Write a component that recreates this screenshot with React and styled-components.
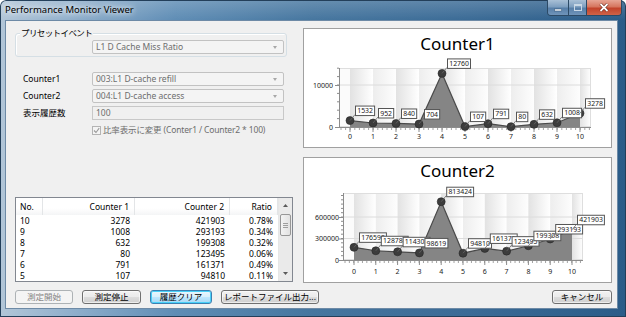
import React from 'react';
import styled, { createGlobalStyle, css } from 'styled-components';

const GlobalStyle = createGlobalStyle`
  html, body {
    margin: 0;
    padding: 0;
    background: #ffffff;
  }
  body {
    font-family: "Noto Sans", "Noto Sans CJK JP", sans-serif;
    font-size: 8.5px;
    color: #000;
  }
`;

const chart1 = {
  title: 'Counter1',
  height: 118,
  titleY: 21,
  plot: { x: 35, y: 39, w: 252, h: 59 },
  x0: 46,
  step: 23,
  zeroY: 98,
  scale: 42 / 10000,
  yTicks: [0, 10000],
  minorY: 2000,
  labelRight: 29,
  xLabelY: 110,
  values: [1532, 952, 840, 704, 12760, 107, 791, 80, 632, 1008, 3278],
};

const chart2 = {
  title: 'Counter2',
  height: 124,
  titleY: 19,
  plot: { x: 39, y: 35, w: 240, h: 67 },
  x0: 50,
  step: 21.8,
  zeroY: 102,
  scale: 21.5 / 300000,
  yTicks: [0, 300000, 600000],
  minorY: 60000,
  labelRight: 35,
  xLabelY: 116,
  values: [176590, 128786, 114302, 98619, 813424, 94810, 161371, 123495, 199308, 293193, 421903],
};

const history = [
  { no: 10, c1: 3278, c2: 421903, ratio: '0.78%' },
  { no: 9, c1: 1008, c2: 293193, ratio: '0.34%' },
  { no: 8, c1: 632, c2: 199308, ratio: '0.32%' },
  { no: 7, c1: 80, c2: 123495, ratio: '0.06%' },
  { no: 6, c1: 791, c2: 161371, ratio: '0.49%' },
  { no: 5, c1: 107, c2: 94810, ratio: '0.11%' },
];

const Window = styled.div`
  width: 626px;
  height: 317px;
  box-sizing: border-box;
  padding: 0 8px 8px 5px;
  display: flex;
  flex-direction: column;
  border-radius: 6px 6px 0 0;
  background:
    linear-gradient(180deg, rgba(255, 255, 255, 0.18) 0, rgba(255, 255, 255, 0) 20px),
    linear-gradient(90deg, #b2c6d8 0%, #8eaecb 12%, #5f8db5 28%, #46769f 50%, #3b6b96 75%, #2b5c88 100%);
  box-shadow: inset 0 0 0 1px #233f5a;
`;

const TitleBar = styled.div`
  height: 20px;
  display: flex;
  align-items: flex-start;
`;

const TitleText = styled.div`
  padding-top: 4px;
  font-size: 9.5px;
  line-height: 12px;
  color: #000;
  text-shadow: 0 0 5px #fff, 0 0 9px rgba(255, 255, 255, 0.9);
`;

const CaptionGroup = styled.div`
  margin-left: auto;
  margin-right: -4px;
  display: flex;
  height: 15px;
  border: 1px solid #2c4a66;
  border-top: none;
  border-radius: 0 0 4px 4px;
  overflow: hidden;
`;

const CaptionButton = styled.div`
  width: ${p => p.w}px;
  display: flex;
  align-items: center;
  justify-content: center;
  border-left: ${p => (p.first ? 'none' : '1px solid #2c4a66')};
  background: ${p =>
    p.close
      ? 'linear-gradient(180deg, #e7a595 0%, #d6765f 45%, #c2432b 55%, #cf6348 100%)'
      : 'linear-gradient(180deg, #a9c0d6 0%, #7e9fc0 45%, #587fa8 55%, #6f94ba 100%)'};
`;

const Client = styled.div`
  flex: 1;
  display: flex;
  flex-direction: column;
  background: #f0f0f0;
  border: 1px solid #6d8aa6;
`;

const Main = styled.div`
  height: 262px;
  display: flex;
`;

const LeftCol = styled.div`
  width: 288px;
  box-sizing: border-box;
  padding-left: 9px;
  display: flex;
  flex-direction: column;
`;

const GroupBox = styled.div`
  position: relative;
  margin-top: 12px;
  width: 272px;
  height: 24px;
  box-sizing: border-box;
  padding: 6px 0 0 76px;
  border: 1px solid #d5dfe5;
  border-radius: 3px;
  box-shadow: inset 1px 1px 0 #fff;
`;

const Legend = styled.span`
  position: absolute;
  top: -7px;
  left: 4px;
  padding: 0 1px;
  background: #f0f0f0;
  line-height: 12px;
  letter-spacing: -0.6px;
`;

const Select = styled.div`
  position: relative;
  width: 192px;
  height: 14px;
  box-sizing: border-box;
  padding-left: 3px;
  border: 1px solid #c2c2c2;
  border-radius: 2px;
  background: #f4f4f4;
  color: #6d6d6d;
  line-height: 12px;

  &::after {
    content: '';
    position: absolute;
    right: 6px;
    top: 5px;
    border-left: 2.5px solid transparent;
    border-right: 2.5px solid transparent;
    border-top: 3px solid #a7a7a7;
  }
`;

const TextBox = styled.div`
  width: 192px;
  height: 14px;
  box-sizing: border-box;
  padding-left: 3px;
  border: 1px solid #c8c8c8;
  background: #f0f0f0;
  color: #6d6d6d;
  line-height: 12px;
`;

const Form = styled.div`
  margin: 15px 0 0 8px;
  display: grid;
  grid-template-columns: 69px 192px;
  row-gap: 3px;
  align-items: center;
`;

const FieldLabel = styled.div`
  line-height: 12px;
`;

const CheckRow = styled.div`
  grid-column: 2;
  margin-top: 1px;
  display: flex;
  align-items: center;
  gap: 2px;
  color: #6d6d6d;
  line-height: 12px;
  letter-spacing: -0.15px;
`;

const CheckBox = styled.div`
  width: 7px;
  height: 7px;
  border: 1px solid #b4b4b4;
  background: #f4f4f4;
  display: flex;
  align-items: center;
  justify-content: center;
`;

const ListView = styled.div`
  margin-top: auto;
  margin-bottom: 1px;
  width: 278px;
  height: 85px;
  box-sizing: border-box;
  border: 1px solid #828790;
  background: #fff;
  display: flex;
`;

const ListBody = styled.div`
  flex: 1;
  display: flex;
  flex-direction: column;
`;

const ListRow = styled.div`
  display: grid;
  grid-template-columns: 27px 92px 95px 48px;
  height: ${p => (p.header ? 17 : 11)}px;
  align-items: center;
  line-height: 11px;
`;

const Cell = styled.div`
  box-sizing: border-box;
  padding: ${p => (p.right ? '0 5px 0 0' : '0 0 0 4px')};
  text-align: ${p => (p.right ? 'right' : 'left')};
  ${p =>
    p.header &&
    css`
      height: 100%;
      display: flex;
      align-items: center;
      justify-content: ${p.right ? 'flex-end' : 'flex-start'};
      border-right: 1px solid #e3e5e7;
      background: linear-gradient(180deg, #ffffff 0%, #ffffff 60%, #f4f5f6 100%);
    `}
`;

const ScrollBar = styled.div`
  width: 15px;
  display: flex;
  flex-direction: column;
  background: #eaeaea;
  border-left: 1px solid #e6e6e6;
`;

const ScrollArrow = styled.div`
  height: 15px;
  display: flex;
  align-items: center;
  justify-content: center;
`;

const ScrollTrack = styled.div`
  flex: 1;
  padding: 1px 1px 0;
`;

const Thumb = styled.div`
  height: 22px;
  box-sizing: border-box;
  border: 1px solid #979797;
  border-radius: 2px;
  background: linear-gradient(90deg, #f3f3f3, #e2e2e2);
  display: flex;
  align-items: center;
  justify-content: center;
`;

const RightCol = styled.div`
  padding: 7px 0 0 9px;
  display: flex;
  flex-direction: column;
  gap: 9px;
`;

const ChartPanel = styled.div`
  width: 309px;
  box-sizing: border-box;
  border: 1px solid #a0a0a0;
  background: #fff;

  svg {
    display: block;
  }
`;

const ButtonBar = styled.div`
  height: 25px;
  box-sizing: border-box;
  padding: 7px 5px 0 9px;
  display: flex;
  gap: 9px;
`;

const Button = styled.div`
  width: ${p => p.w}px;
  height: 14px;
  box-sizing: border-box;
  margin-left: ${p => (p.pushRight ? 'auto' : '0')};
  border: 1px solid #707070;
  border-radius: 3px;
  text-align: center;
  line-height: 12px;
  background: linear-gradient(180deg, #f2f2f2 0%, #ebebeb 48%, #dddddd 52%, #cfcfcf 100%);
  box-shadow: inset 0 0 0 1px rgba(255, 255, 255, 0.6);

  ${p =>
    p.variant === 'default' &&
    css`
      border-color: #3c7fb1;
      background: linear-gradient(180deg, #eaf6fd 0%, #d9f0fc 48%, #bee6fd 52%, #a7d9f5 100%);
      box-shadow: inset 0 0 0 1px #48d0f8;
    `}

  ${p =>
    p.variant === 'disabled' &&
    css`
      border-color: #adb2b5;
      background: #f4f4f4;
      color: #838383;
      box-shadow: none;
    `}
`;

function Chart({ cfg }) {
  const { plot, x0, step, zeroY, scale, values } = cfg;
  const pts = values.map((v, i) => ({ v, x: x0 + step * i, y: zeroY - v * scale }));
  const xEnd = x0 + step * 10;
  const area = [`${x0},${zeroY}`, ...pts.map(p => `${p.x},${p.y}`), `${xEnd},${zeroY}`].join(' ');
  const bands = values.map((v, i) => i);
  const topValue = (zeroY - plot.y) / scale;
  const minor = [];
  for (let v = cfg.minorY; v < topValue; v += cfg.minorY) minor.push(v);
  const xMinor = [];
  for (let x = plot.x + 2; x <= plot.x + plot.w; x += step / 5) xMinor.push(x);

  return (
    <svg width="307" height={cfg.height}>
      <defs>
        <linearGradient id={`band-${cfg.title}`} x1="0" x2="1" y1="0" y2="0">
          <stop offset="0" stopColor="#e2e2e2" />
          <stop offset="1" stopColor="#ffffff" />
        </linearGradient>
      </defs>
      <text x="153.5" y={cfg.titleY} textAnchor="middle" fontSize="17" fill="#000"
        fontFamily='"Noto Sans", sans-serif'>
        {cfg.title}
      </text>
      <rect x={plot.x} y={plot.y} width={plot.w} height={plot.h} fill="#fbfbfb" />
      {bands.map(i => (
        <rect key={i} x={x0 + step * i} y={plot.y} width={Math.min(step, plot.x + plot.w - (x0 + step * i))}
          height={plot.h} fill={`url(#band-${cfg.title})`} opacity={i % 2 ? 0.55 : 1} />
      ))}
      {cfg.yTicks.slice(1).map(t => (
        <line key={t} x1={plot.x} x2={plot.x + plot.w} y1={zeroY - t * scale} y2={zeroY - t * scale}
          stroke="#dcdcdc" strokeWidth="1" />
      ))}
      <rect x={plot.x + 0.5} y={plot.y + 0.5} width={plot.w - 1} height={plot.h - 1} fill="none" stroke="#dedede" />
      <polygon points={area} fill="#858585" />
      <polyline points={pts.map(p => `${p.x},${p.y}`).join(' ')} fill="none" stroke="#4a4a4a" strokeWidth="1.2" />
      <line x1={plot.x + 0.5} x2={plot.x + 0.5} y1={plot.y} y2={zeroY + 1} stroke="#8c8c8c" />
      <line x1={plot.x} x2={plot.x + plot.w} y1={zeroY + 0.5} y2={zeroY + 0.5} stroke="#8c8c8c" />
      {minor.map(v => (
        <line key={v} x1={plot.x - 2} x2={plot.x} y1={zeroY - v * scale} y2={zeroY - v * scale} stroke="#8c8c8c" />
      ))}
      {cfg.yTicks.map(t => (
        <g key={t}>
          <line x1={plot.x - 4} x2={plot.x} y1={zeroY - t * scale + 0.5} y2={zeroY - t * scale + 0.5} stroke="#8c8c8c" />
          <text x={cfg.labelRight} y={zeroY - t * scale + 2.5} textAnchor="end" fontSize="7" fill="#222">
            {t}
          </text>
        </g>
      ))}
      {xMinor.map(x => (
        <line key={x} x1={x} x2={x} y1={zeroY + 1} y2={zeroY + 3} stroke="#8c8c8c" strokeWidth="0.8" />
      ))}
      {pts.map((p, i) => (
        <g key={i}>
          <line x1={p.x} x2={p.x} y1={zeroY + 1} y2={zeroY + 5} stroke="#8c8c8c" />
          <text x={p.x} y={cfg.xLabelY} textAnchor="middle" fontSize="7" fill="#222">
            {i}
          </text>
        </g>
      ))}
      {pts.map((p, i) => (
        <circle key={i} cx={p.x} cy={p.y} r="4" fill="#3c3c3c" stroke="#262626" strokeWidth="0.6" />
      ))}
      {pts.map((p, i) => {
        const text = String(p.v);
        const w = text.length * 3.9 + 3.5;
        const lx = p.x + 5;
        const ly = p.y - 15;
        return (
          <g key={i}>
            <line x1={p.x} y1={p.y} x2={lx} y2={ly + 9} stroke="#666" strokeWidth="0.8" />
            <rect x={lx + 0.5} y={ly + 0.5} width={w} height="9.5" fill="#fff" stroke="#555" />
            <text x={lx + 2.2} y={ly + 7.6} fontSize="6.9" fill="#1a1a1a">
              {text}
            </text>
          </g>
        );
      })}
    </svg>
  );
}

export default function App() {
  return (
    <>
      <GlobalStyle />
      <Window>
        <TitleBar>
          <TitleText>Performance Monitor Viewer</TitleText>
          <CaptionGroup>
            <CaptionButton w={20} first>
              <svg width="8" height="8">
                <rect x="0.5" y="5" width="7" height="2" fill="#fff" stroke="#3b5d7e" strokeWidth="0.6" />
              </svg>
            </CaptionButton>
            <CaptionButton w={17}>
              <svg width="8" height="7">
                <rect x="0.5" y="0.5" width="7" height="6" fill="none" stroke="#c9d8e6" strokeWidth="1" />
                <rect x="0.5" y="0.5" width="7" height="1.5" fill="#c9d8e6" />
              </svg>
            </CaptionButton>
            <CaptionButton w={34} close>
              <svg width="10" height="9">
                <path d="M1.5 1 L8.5 8 M8.5 1 L1.5 8" stroke="#5a1b10" strokeWidth="3" />
                <path d="M1.5 1 L8.5 8 M8.5 1 L1.5 8" stroke="#fff" strokeWidth="1.8" />
              </svg>
            </CaptionButton>
          </CaptionGroup>
        </TitleBar>
        <Client>
          <Main>
            <LeftCol>
              <GroupBox>
                <Legend>プリセットイベント</Legend>
                <Select>L1 D Cache Miss Ratio</Select>
              </GroupBox>
              <Form>
                <FieldLabel>Counter1</FieldLabel>
                <Select>003:L1 D-cache refill</Select>
                <FieldLabel>Counter2</FieldLabel>
                <Select>004:L1 D-cache access</Select>
                <FieldLabel>表示履歴数</FieldLabel>
                <TextBox>100</TextBox>
                <CheckRow>
                  <CheckBox>
                    <svg width="7" height="7">
                      <path d="M1 3.5 L3 5.5 L6.2 1.2" fill="none" stroke="#9a9a9a" strokeWidth="1.1" />
                    </svg>
                  </CheckBox>
                  比率表示に変更 (Conter1 / Counter2 * 100)
                </CheckRow>
              </Form>
              <ListView>
                <ListBody>
                  <ListRow header>
                    <Cell header>No.</Cell>
                    <Cell header right>Counter 1</Cell>
                    <Cell header right>Counter 2</Cell>
                    <Cell header right>Ratio</Cell>
                  </ListRow>
                  {history.map(r => (
                    <ListRow key={r.no}>
                      <Cell>{r.no}</Cell>
                      <Cell right>{r.c1}</Cell>
                      <Cell right>{r.c2}</Cell>
                      <Cell right>{r.ratio}</Cell>
                    </ListRow>
                  ))}
                </ListBody>
                <ScrollBar>
                  <ScrollArrow>
                    <svg width="5" height="3"><path d="M0 3 L2.5 0 L5 3 Z" fill="#5a5a5a" /></svg>
                  </ScrollArrow>
                  <ScrollTrack>
                    <Thumb>
                      <svg width="5" height="5">
                        <path d="M0 0.5 H5 M0 2.5 H5 M0 4.5 H5" stroke="#8a8a8a" strokeWidth="0.8" />
                      </svg>
                    </Thumb>
                  </ScrollTrack>
                  <ScrollArrow>
                    <svg width="5" height="3"><path d="M0 0 L2.5 3 L5 0 Z" fill="#5a5a5a" /></svg>
                  </ScrollArrow>
                </ScrollBar>
              </ListView>
            </LeftCol>
            <RightCol>
              <ChartPanel>
                <Chart cfg={chart1} />
              </ChartPanel>
              <ChartPanel>
                <Chart cfg={chart2} />
              </ChartPanel>
            </RightCol>
          </Main>
          <ButtonBar>
            <Button w={58} variant="disabled">測定開始</Button>
            <Button w={59}>測定停止</Button>
            <Button w={62} variant="default">履歴クリア</Button>
            <Button w={98}>レポートファイル出力...</Button>
            <Button w={60} pushRight>キャンセル</Button>
          </ButtonBar>
        </Client>
      </Window>
    </>
  );
}
